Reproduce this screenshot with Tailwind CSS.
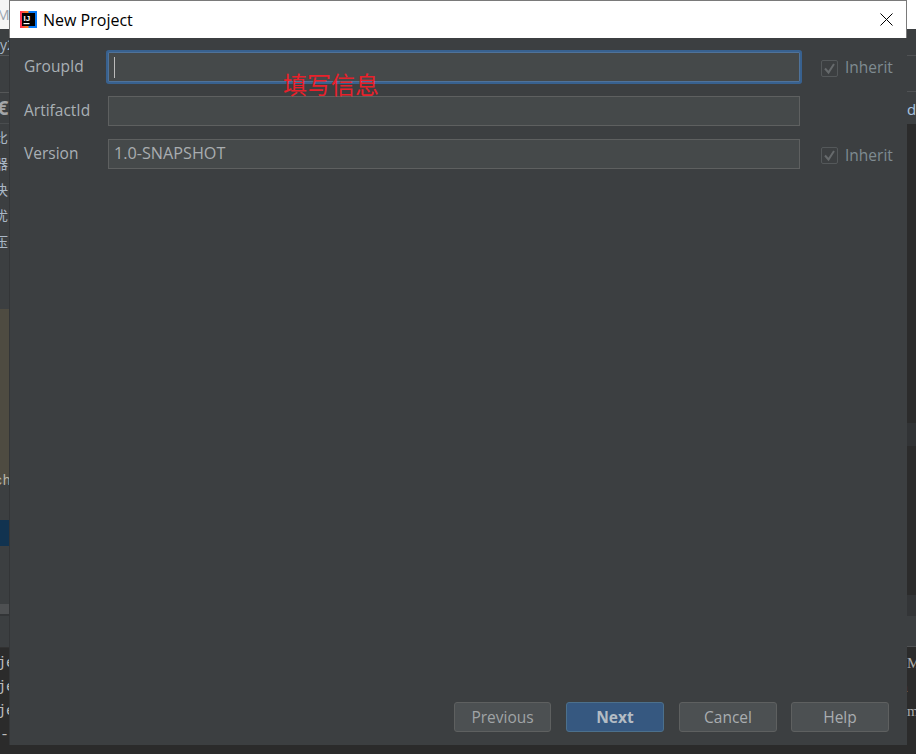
<!DOCTYPE html>
<html lang="zh-CN">
<head>
	<meta charset="UTF-8">
	<title>New Project</title>
	<script src="https://cdn.jsdelivr.net/npm/@tailwindcss/browser@4"></script>
</head>
<body class="bg-[#2b2b2b] overflow-hidden">
	<div class="flex w-[916px] h-[754px] font-['Open_Sans','Noto_Sans_CJK_SC',sans-serif]">

		<!-- IDE behind the dialog, left edge -->
		<div class="w-[9px] h-[754px] shrink-0 overflow-hidden flex flex-col bg-[#3c3f41] text-[#a9b7c6] text-[14px] leading-none whitespace-nowrap">
			<div class="h-[29px] bg-[#f5f5f5] text-[#9aa4ad] pt-[8px] -indent-[3px]">M</div>
			<div class="h-[27px] border-b border-[#555758] pt-[9px] indent-0">y2</div>
			<div class="h-[37px] border-b border-[#555758]"></div>
			<div class="h-[31px] text-[#a4a6a8] font-bold text-[20px] pt-[5px] -indent-[3px] border-b border-[#4a4d4f]">€</div>
			<div class="h-[185px] pt-[7px] -indent-[6px] flex flex-col gap-[12px]">
				<span class="h-[14px]">比</span>
				<span class="h-[14px]">器</span>
				<span class="h-[14px]">决</span>
				<span class="h-[14px]">优</span>
				<span class="h-[14px]">压</span>
			</div>
			<div class="h-[175px] bg-[#4e4b41] pt-[165px] -indent-[6px] text-[#b8b5a8] font-['Liberation_Mono',monospace]">ch</div>
			<div class="h-[36px]"></div>
			<div class="h-[26px] bg-[#113350]"></div>
			<div class="h-[58px]"></div>
			<div class="h-[10px] bg-[#4e5052]"></div>
			<div class="h-[34px] border-t-2 border-t-[#333537] border-b border-b-[#323232]"></div>
			<div class="flex-1 bg-[#2b2b2b] text-[#bbbbbb] font-['Liberation_Mono',monospace] text-[15px] -indent-[3px] pt-[8px] flex flex-col gap-[10px]">
				<span class="h-[14px]">je</span>
				<span class="h-[14px]">je</span>
				<span class="h-[14px]">je</span>
				<span class="h-[14px] indent-0">--</span>
			</div>
		</div>

		<!-- dialog -->
		<div class="w-[898px] h-[745px] shrink-0 flex flex-col bg-[#3c3f41] relative">
			<div class="h-[38px] shrink-0 bg-white border-t border-x border-[#7a7a7a] flex items-center pl-[10px] pr-[13px] text-black text-[16px]">
				<svg class="w-[17px] h-[17px] mr-[6px]" viewBox="0 0 17 17">
					<defs>
						<linearGradient id="ijEdge" x1="0" y1="0" x2="1" y2="0">
							<stop offset="0" stop-color="#fe2857"/>
							<stop offset="0.45" stop-color="#fc801d"/>
							<stop offset="0.55" stop-color="#087cfa"/>
							<stop offset="1" stop-color="#087cfa"/>
						</linearGradient>
					</defs>
					<rect width="17" height="17" fill="url(#ijEdge)"/>
					<rect x="2" y="2" width="13" height="13" fill="#000"/>
					<text x="3.5" y="10" font-size="8" font-weight="700" fill="#fff" font-family="Liberation Sans">IJ</text>
					<rect x="3.5" y="12" width="6" height="1.2" fill="#fff"/>
				</svg>
				<span>New Project</span>
				<svg class="w-[13px] h-[13px] ml-auto" viewBox="0 0 13 13" fill="none" stroke="#000" stroke-width="1">
					<path d="M0.5 0.5 L12.5 12.5 M12.5 0.5 L0.5 12.5"/>
				</svg>
			</div>

			<div class="flex-1 flex flex-col border-l border-[#333537] pl-[14px] pr-[14px] text-[#bbbbbb] text-[15.5px]">
				<div class="flex flex-col gap-[14px] pt-[14px]">
					<div class="flex items-center h-[30px]">
						<span class="w-[84px] shrink-0 -mt-[1px] text-[#a9b0b5]">GroupId</span>
						<div class="w-[692px] shrink-0 h-[30px] bg-[#45494a] border border-[#4f7299] ring-2 ring-[#38618f] rounded-[1px] flex items-center pl-[5px]">
							<div class="w-px h-[21px] bg-[#bbbbbb]"></div>
						</div>
						<div class="ml-[21px] w-[17px] h-[17px] shrink-0 mt-[2px] border border-[#54585a] rounded-[2px] flex items-center justify-center">
							<svg class="w-[13px] h-[13px]" viewBox="0 0 13 13" fill="none" stroke="#666a6c" stroke-width="2"><path d="M2 6.5 L5.5 10.5 L11 2"/></svg>
						</div>
						<span class="ml-[7px] mt-[2px] text-[#7f8b91]">Inherit</span>
					</div>
					<div class="flex items-center h-[30px]">
						<span class="w-[84px] shrink-0 -mt-[1px] text-[#a9b0b5]">ArtifactId</span>
						<div class="w-[692px] shrink-0 h-[30px] bg-[#45494a] border border-[#5e6060]"></div>
					</div>
					<div class="flex items-center h-[30px] -mt-px">
						<span class="w-[84px] shrink-0 -mt-[1px] text-[#a9b0b5]">Version</span>
						<div class="w-[692px] shrink-0 h-[30px] bg-[#45494a] border border-[#5e6060] flex items-center pl-[5px] pb-[2px] text-[16.2px] text-[#a9adb0]">1.0-SNAPSHOT</div>
						<div class="ml-[21px] w-[17px] h-[17px] shrink-0 mt-[2px] border border-[#54585a] rounded-[2px] flex items-center justify-center">
							<svg class="w-[13px] h-[13px]" viewBox="0 0 13 13" fill="none" stroke="#666a6c" stroke-width="2"><path d="M2 6.5 L5.5 10.5 L11 2"/></svg>
						</div>
						<span class="ml-[7px] mt-[4px] text-[#7f8b91]">Inherit</span>
					</div>
				</div>

				<div class="mt-auto flex justify-end pr-[4px] pb-[13px]">
					<button class="w-[97px] h-[30px] pt-[2px] bg-[#4c5052] border border-[#5e6060] rounded-[3px] text-[#a0a4a6]">Previous</button>
					<button class="w-[98px] h-[30px] pt-[2px] ml-[15px] bg-[#365880] border border-[#4c708c] rounded-[3px] text-[#b4bcc4] font-bold">Next</button>
					<button class="w-[98px] h-[30px] pt-[2px] ml-[15px] bg-[#4c5052] border border-[#5e6060] rounded-[3px] text-[#a9adb0]">Cancel</button>
					<button class="w-[98px] h-[30px] pt-[2px] ml-[14px] bg-[#4c5052] border border-[#5e6060] rounded-[3px] text-[#a9adb0]">Help</button>
				</div>
			</div>

			<!-- red annotation drawn over the screenshot -->
			<span class="absolute left-[274px] top-[69px] text-[24px] leading-[30px] text-[#e8212b] font-['Noto_Sans_CJK_SC',sans-serif] font-normal">填写信息</span>
		</div>

		<!-- IDE behind the dialog, right edge -->
		<div class="w-[9px] h-[754px] shrink-0 overflow-hidden flex flex-col bg-[#2b2b2b] text-[14px] leading-none">
			<div class="h-[29px] bg-white"></div>
			<div class="h-[27px] bg-[#3c3f41] border-b border-[#505254]"></div>
			<div class="h-[36px] bg-[#3c3f41] border-b border-[#505254]"></div>
			<div class="h-[32px] bg-[#3c3f41] text-[#a9c5e0] text-[15px] pt-[10px]">d</div>
			<div class="h-[299px]"></div>
			<div class="h-[23px] bg-[#313335]"></div>
			<div class="h-[149px]"></div>
			<div class="h-[21px] bg-[#333537]"></div>
			<div class="h-[31px] bg-[#3c3f41] border-b border-[#505254]"></div>
			<div class="flex-1 text-[#aaaaaa] font-['Liberation_Serif',serif] text-[15px] pt-[9px] flex flex-col gap-[10px]">
				<span class="h-[14px]">M</span>
				<span class="h-[14px] -indent-[6px]">a</span>
				<span class="h-[14px]">m</span>
			</div>
		</div>
	</div>
</body>
</html>
